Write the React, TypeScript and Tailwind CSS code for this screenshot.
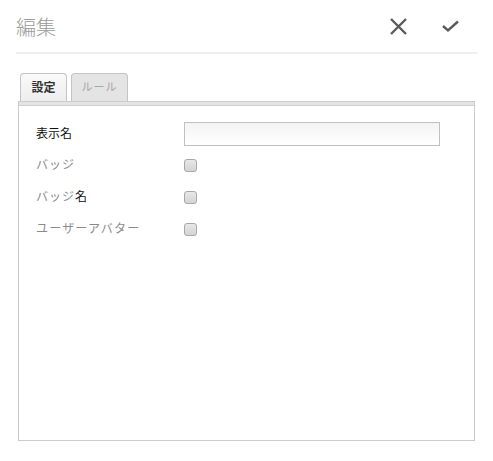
const font = { fontFamily: '"Liberation Sans", "Noto Sans CJK JP", sans-serif' };

const Check = () => (
  <span className="block w-[13px] h-[13px] rounded-[3px] border border-[#a8a8a8] bg-gradient-to-b from-[#e8e8e8] to-[#d4d4d4]" />
);

const Row = ({ children, control, h = "h-[32px]" }: { children: React.ReactNode; control: React.ReactNode; h?: string }) => (
  <div className={`flex items-center ${h}`}>
    <div className="w-[148px] text-[12px]">{children}</div>
    {control}
  </div>
);

export default function App() {
  return (
    <div className="w-[493px] h-[461px] bg-white relative" style={font}>
      {/* header */}
      <div className="mx-4 h-[54px] flex items-center border-b-2 border-[#efefef]">
        <div className="text-[20px] font-light text-[#9a9a9a] pt-[3px]">編集</div>
        <div className="ml-auto flex items-center gap-[33px] mr-[17px]">
          <svg width="19" height="19" viewBox="0 0 19 19">
            <path d="M2 2 L17 17 M17 2 L2 17" stroke="#5a5a5a" strokeWidth="2.4" />
          </svg>
          <svg width="19" height="14" viewBox="0 0 19 14">
            <path d="M2 7 L7 11.5 L17 2.5" stroke="#5a5a5a" strokeWidth="2.4" fill="none" />
          </svg>
        </div>
      </div>

      {/* tabs */}
      <div className="flex items-end gap-[4px] ml-[20px] mt-[19px] h-[28px]">
        <div className="w-[47px] h-[28px] border border-b-0 border-[#c4c4c4] rounded-t-[4px] bg-gradient-to-b from-[#fafafa] to-[#ededed] flex items-center justify-center text-[12px] font-bold text-[#333]">
          設定
        </div>
        <div className="w-[57px] h-[28px] border border-b-0 border-[#c4c4c4] rounded-t-[4px] bg-[#e4e4e4] flex items-center justify-center text-[11px] text-[#a5a5a5] tracking-[1px]">
          ルール
        </div>
      </div>

      {/* panel */}
      <div className="ml-[18px] w-[457px] h-[340px] border border-[#cccccc] flex flex-col">
        <div className="h-[4px] bg-[#e4e4e4] border-b border-[#d0d0d0]" />
        <div className="pl-[17px] pt-[12px] flex flex-col">
          <Row h="h-[31px]" control={<div className="w-[256px] h-[24px] border border-[#c0c0c0] bg-gradient-to-b from-[#f3f3f3] to-white" />}>
            <span className="text-[#111]">表示名</span>
          </Row>
          <Row control={<Check />}>
            <span className="text-[#8a8a8a] tracking-[1px]">バッジ</span>
          </Row>
          <Row control={<Check />}>
            <span className="text-[#8a8a8a] tracking-[1px]">バッジ</span>
            <span className="text-[#111]">名</span>
          </Row>
          <Row control={<Check />}>
            <span className="text-[#8a8a8a] tracking-[1.2px]">ユーザーアバター</span>
          </Row>
        </div>
      </div>
    </div>
  );
}
